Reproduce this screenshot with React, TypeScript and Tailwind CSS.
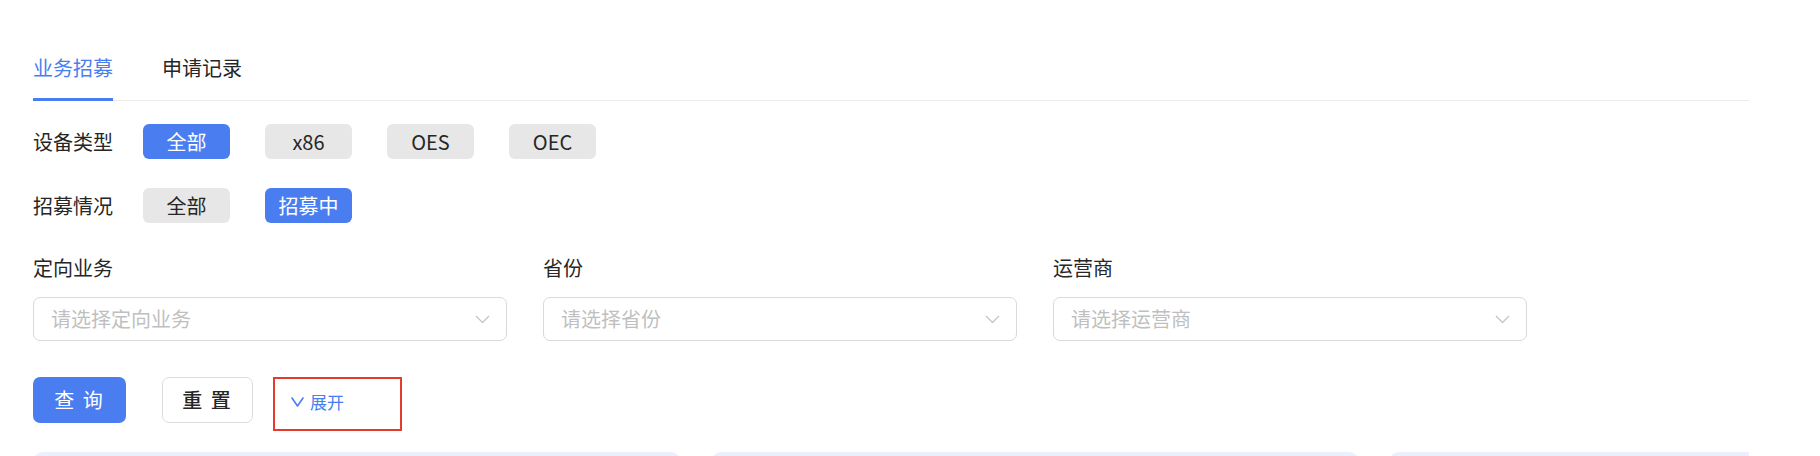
import { useState } from 'react';

const deviceTypes = ['全部', 'x86', 'OES', 'OEC'];
const recruitStates = ['全部', '招募中'];
const selects = [
  { label: '定向业务', placeholder: '请选择定向业务' },
  { label: '省份', placeholder: '请选择省份' },
  { label: '运营商', placeholder: '请选择运营商' },
];

function Chevron({ className }: { className?: string }) {
  return (
    <svg className={className} viewBox="0 0 15 9" fill="none">
      <polyline points="1,1 7.5,7.5 14,1" stroke="currentColor" strokeWidth="1.3" strokeLinejoin="round" />
    </svg>
  );
}

function FilterRow({ label, options, active }: { label: string; options: string[]; active: string }) {
  return (
    <div className="flex items-center">
      <span className="w-[110px] shrink-0 text-[20px] leading-[28px] text-[#262626]">{label}</span>
      <div className="flex gap-[35px]">
        {options.map((opt) => (
          <button
            key={opt}
            className={
              opt === active
                ? 'w-[87px] h-[35px] rounded-[6px] bg-[#4a7ef0] text-white text-[20px] leading-[35px]'
                : 'w-[87px] h-[35px] rounded-[6px] bg-[#e7e7e7] text-[#262626] text-[20px] leading-[35px]'
            }
          >
            {opt}
          </button>
        ))}
      </div>
    </div>
  );
}

export default function App() {
  const [tab] = useState('业务招募');

  return (
    <div
      className="w-full h-[456px] overflow-hidden bg-white pl-[33px] pr-[71px]"
      style={{ fontFamily: '"Noto Sans CJK SC", "Noto Sans", sans-serif' }}
    >
      {/* tabs */}
      <div className="flex gap-[49px] pt-[54px] border-b border-[#ebebeb]">
        {['业务招募', '申请记录'].map((t) => (
          <div
            key={t}
            className={
              t === tab
                ? '-mb-px pb-[16px] text-[20px] leading-[28px] text-[#4a7ef0] border-b-[3px] border-[#4a7ef0]'
                : '-mb-px pb-[16px] text-[20px] leading-[28px] text-[#262626] border-b-[3px] border-transparent'
            }
          >
            {t}
          </div>
        ))}
      </div>

      {/* filters */}
      <div className="mt-[23px] flex flex-col gap-[29px]">
        <FilterRow label="设备类型" options={deviceTypes} active="全部" />
        <FilterRow label="招募情况" options={recruitStates} active="招募中" />
      </div>

      {/* selects */}
      <div className="mt-[31px] flex gap-[36px]">
        {selects.map((s) => (
          <div key={s.label} className="w-[474px]">
            <div className="text-[20px] leading-[28px] text-[#262626]">{s.label}</div>
            <div className="mt-[15px] h-[44px] rounded-[7px] border border-[#d9d9d9] flex items-center justify-between pl-[17px] pr-[16px]">
              <span className="text-[20px] text-[#bfbfbf]">{s.placeholder}</span>
              <Chevron className="w-[15px] h-[9px] text-[#c4c4c4]" />
            </div>
          </div>
        ))}
      </div>

      {/* actions */}
      <div className="mt-[36px] flex items-start">
        <button className="w-[93px] h-[46px] rounded-[7px] bg-[#4a7ef0] text-white text-[20px] tracking-[2px]">
          查 询
        </button>
        <button className="ml-[36px] w-[91px] h-[46px] rounded-[7px] border border-[#dcdcdc] bg-white text-[#262626] text-[20px] font-medium tracking-[2px]">
          重 置
        </button>
        <button className="ml-[20px] w-[129px] h-[54px] border-2 border-[#e53b2f] flex items-center pl-[16px] pb-[4px] text-[#4a7ef0]">
          <svg className="w-[13px] h-[10px]" viewBox="0 0 13 10" fill="none">
            <polyline points="1,1 6.5,9 12,1" stroke="currentColor" strokeWidth="1.6" strokeLinejoin="round" strokeLinecap="round" />
          </svg>
          <span className="ml-[6px] text-[17px] leading-[24px]">展开</span>
        </button>
      </div>

      {/* cards */}
      <div className="mt-[21px] flex gap-[30px] overflow-hidden">
        {[0, 1, 2].map((i) => (
          <div key={i} className="w-[648px] shrink-0 h-[120px] rounded-t-[10px] bg-[#eaf0fd]" />
        ))}
      </div>
    </div>
  );
}
